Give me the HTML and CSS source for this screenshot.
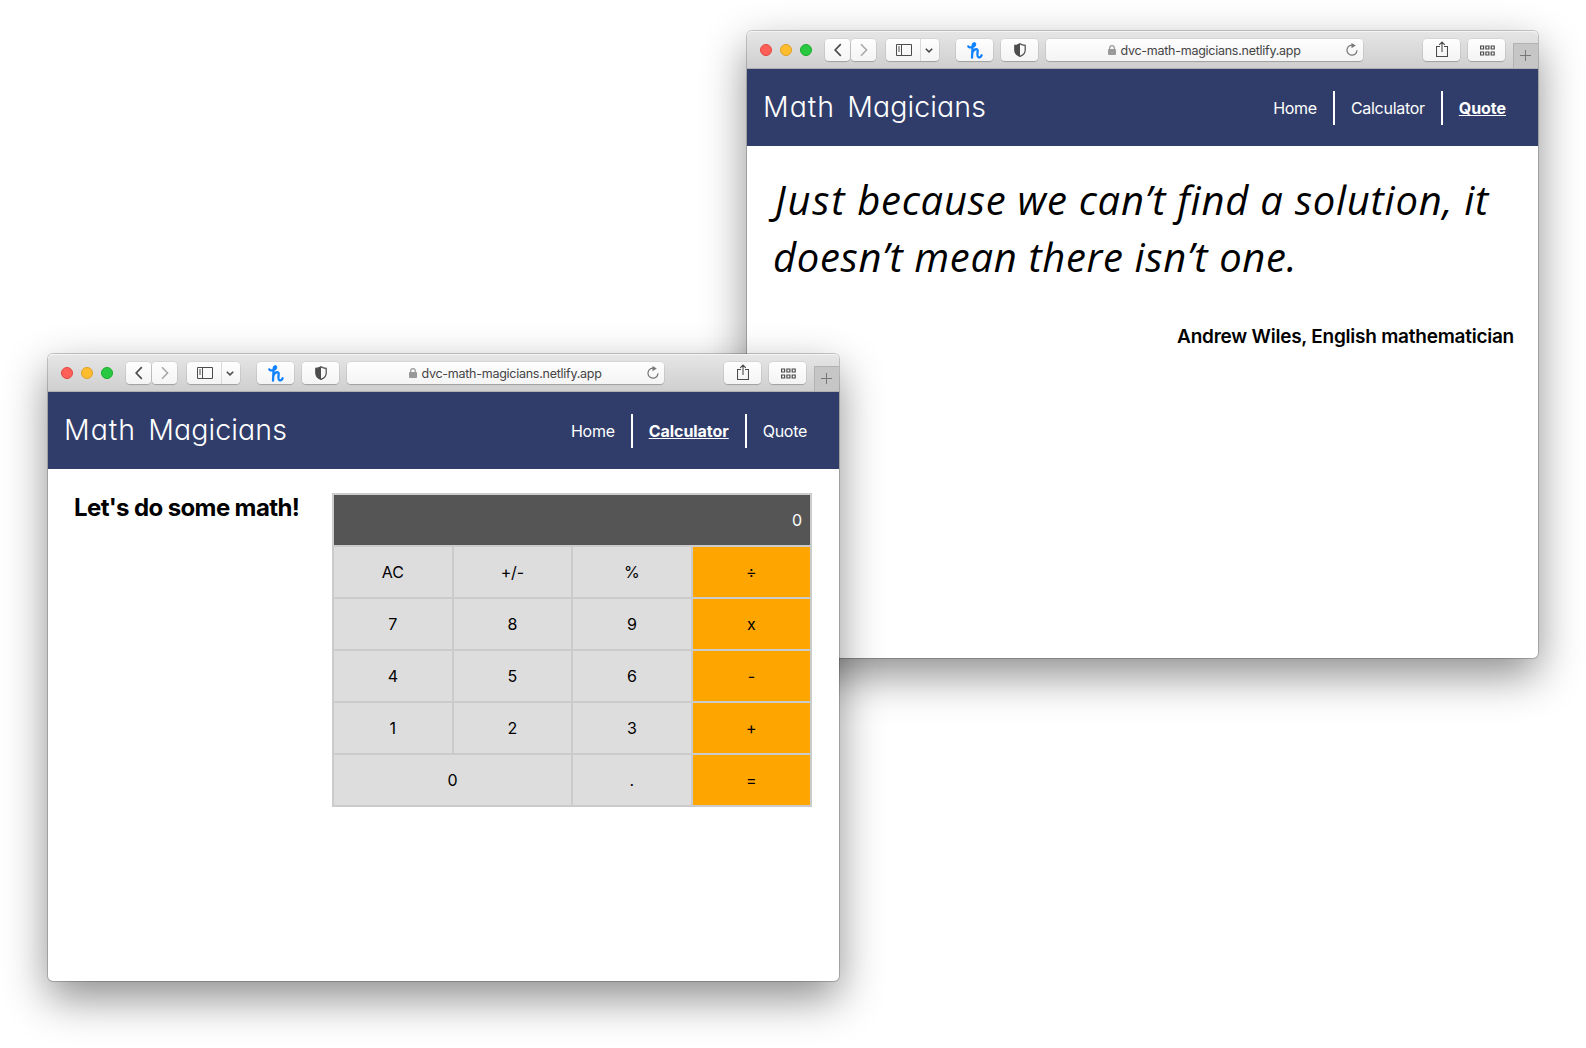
FILE: index.html
```html
<!DOCTYPE html>
<html lang="en">
<head>
<meta charset="utf-8">
<title>Math Magicians</title>
<link rel="stylesheet" href="styles.css">
</head>
<body>
<svg class="sprite" aria-hidden="true">
  <symbol id="back" viewBox="0 0 8 14"><path d="M6.800 1.2 1.2 7 6.800 12.8" fill="none" stroke="currentColor" stroke-width="1.7"/></symbol>
  <symbol id="forward" viewBox="0 0 8 14"><path d="M1 1.2 6.6 7 1 12.8" fill="none" stroke="currentColor" stroke-width="1.5"/></symbol>
  <symbol id="sidebar" viewBox="0 0 16 12"><path d="M.5.5h15v11H.5zM5.5.5v11M2 3h2M2 5h2M2 7h2" fill="none" stroke="currentColor"/></symbol>
  <symbol id="down" viewBox="0 0 8 5"><path d="M.8.8 4 3.9 7.2.8" fill="none" stroke="currentColor" stroke-width="1.6"/></symbol>
  <symbol id="honey" viewBox="0 0 16 17"><path d="M1.300 4.300C1.800 6.400 7.900 5 8.100 2.400 8.200.700 5.900.8 5.700 3.200L5 15.700M5.200 10.800C6.300 7.700 10.600 5.600 10.700 8.600 10.700 10.700 9.500 14.500 11.500 15.300 12.900 15.700 14.100 14.600 14.600 13.300" fill="none" stroke="currentColor" stroke-width="2.300" stroke-linecap="round" stroke-linejoin="round"/></symbol>
  <symbol id="shield" viewBox="0 0 12 14"><path d="M6 .8C7.500 1.900 9.300 2.300 11.200 2.400V7.200C11.200 10.200 9 12.200 6 13.400 3 12.200.8 10.200.8 7.200V2.400C2.700 2.300 4.500 1.900 6 .8Z" fill="none" stroke="currentColor" stroke-width="1.200"/><path d="M6 .8V13.400C3 12.200.8 10.200.8 7.200V2.400C2.700 2.300 4.500 1.900 6 .8Z" fill="currentColor"/></symbol>
  <symbol id="lock" viewBox="0 0 8 10"><rect y="4" width="8" height="6" rx=".8" fill="currentColor"/><path d="M1.700 4.500V3a2.300 2.300 0 0 1 4.600 0v1.500" fill="none" stroke="currentColor" stroke-width="1.200"/></symbol>
  <symbol id="reload" viewBox="0 0 12 13"><path d="M7.500 2.400A5 5 0 1 0 11 7.300" fill="none" stroke="currentColor" stroke-width="1.200"/><path d="M5.500 0 9.800 2.600 5.500 5.200Z" fill="currentColor"/></symbol>
  <symbol id="share" viewBox="0 0 12 16"><path d="M4 5.500H.5v10h11v-10H8M6 11V1M3.200 3.800 6 1l2.800 2.800" fill="none" stroke="currentColor" stroke-width="1.100"/></symbol>
  <symbol id="grid" viewBox="0 0 15 11"><path d="M.6 1h3v3h-3zM5.900 1h3v3h-3zM11.200 1h3v3h-3zM.6 7h3v3h-3zM5.900 7h3v3h-3zM11.200 7h3v3h-3z" fill="none" stroke="currentColor" stroke-width="1.200"/></symbol>
  <symbol id="plus" viewBox="0 0 11 11"><path d="M5.500 0v11M0 5.500h11" fill="none" stroke="currentColor"/></symbol>
</svg>

<section class="window window-quote">
  <div class="toolbar">
    <div class="lights"><i class="light red"></i><i class="light yellow"></i><i class="light green"></i></div>
    <div class="history"><span class="btn"><svg class="i-back"><use href="#back"/></svg></span><span class="btn dim"><svg class="i-back"><use href="#forward"/></svg></span></div>
    <div class="btn side"><span class="side-main"><svg class="i-side"><use href="#sidebar"/></svg></span><span class="side-menu"><svg class="i-down"><use href="#down"/></svg></span></div>
    <div class="btn wide honey"><svg class="i-honey"><use href="#honey"/></svg></div>
    <div class="btn wide shield"><svg class="i-shield"><use href="#shield"/></svg></div>
    <div class="btn address"><svg class="i-lock"><use href="#lock"/></svg><span class="url">dvc-math-magicians.netlify.app</span><svg class="i-reload"><use href="#reload"/></svg></div>
    <div class="btn wide share"><svg class="i-share"><use href="#share"/></svg></div>
    <div class="btn wide tabs"><svg class="i-grid"><use href="#grid"/></svg></div>
    <div class="newtab"><svg class="i-plus"><use href="#plus"/></svg></div>
  </div>
  <header class="site-header">
    <h1 class="brand"><span class="brand-lead">Math</span> Magicians</h1>
    <nav class="nav"><a>Home</a><a>Calculator</a><a class="active">Quote</a></nav>
  </header>
  <main class="quote-page">
    <p class="quote"><span class="line-one"><span class="lead">Just</span> because we can’t find a solution, it</span><br><span class="line-two">doesn’t mean there isn’t one.</span></p>
    <p class="author">Andrew Wiles, English mathematician</p>
  </main>
</section>

<section class="window window-calc">
  <div class="toolbar">
    <div class="lights"><i class="light red"></i><i class="light yellow"></i><i class="light green"></i></div>
    <div class="history"><span class="btn"><svg class="i-back"><use href="#back"/></svg></span><span class="btn dim"><svg class="i-back"><use href="#forward"/></svg></span></div>
    <div class="btn side"><span class="side-main"><svg class="i-side"><use href="#sidebar"/></svg></span><span class="side-menu"><svg class="i-down"><use href="#down"/></svg></span></div>
    <div class="btn wide honey"><svg class="i-honey"><use href="#honey"/></svg></div>
    <div class="btn wide shield"><svg class="i-shield"><use href="#shield"/></svg></div>
    <div class="btn address"><svg class="i-lock"><use href="#lock"/></svg><span class="url">dvc-math-magicians.netlify.app</span><svg class="i-reload"><use href="#reload"/></svg></div>
    <div class="btn wide share"><svg class="i-share"><use href="#share"/></svg></div>
    <div class="btn wide tabs"><svg class="i-grid"><use href="#grid"/></svg></div>
    <div class="newtab"><svg class="i-plus"><use href="#plus"/></svg></div>
  </div>
  <header class="site-header">
    <h1 class="brand"><span class="brand-lead">Math</span> Magicians</h1>
    <nav class="nav"><a>Home</a><a class="active">Calculator</a><a>Quote</a></nav>
  </header>
  <main class="calc-page">
    <h2 class="intro">Let's do some math!</h2>
    <div class="calculator">
      <div class="display">0</div>
      <div class="key">AC</div><div class="key">+/-</div><div class="key">%</div><div class="key op">÷</div>
      <div class="key">7</div><div class="key">8</div><div class="key">9</div><div class="key op">x</div>
      <div class="key">4</div><div class="key">5</div><div class="key">6</div><div class="key op">-</div>
      <div class="key">1</div><div class="key">2</div><div class="key">3</div><div class="key op">+</div>
      <div class="key zero">0</div><div class="key">.</div><div class="key op">=</div>
    </div>
  </main>
</section>
</body>
</html>
```
FILE: styles.css
```css
* { box-sizing: border-box; }
body {
  margin: 0;
  width: 1586px;
  height: 1048px;
  position: relative;
  overflow: hidden;
  background: #fff;
  color: #000;
  font: 16px/1.2 Inter, "Liberation Sans", sans-serif;
}
h1, h2, p { margin: 0; }
.sprite { display: none; }
svg { display: block; flex: none; }

.window {
  position: absolute;
  width: 791px;
  height: 627px;
  border-radius: 5px;
  background: #fff;
  box-shadow: 0 0 0 1px rgba(0, 0, 0, .2), 0 17px 44px rgba(0, 0, 0, .45);
}
.window-quote { left: 747px; top: 31px; }
.window-calc { left: 48px; top: 354px; }

.toolbar {
  display: flex;
  align-items: flex-start;
  height: 38px;
  padding: 8px 0 0 13px;
  border-radius: 5px 5px 0 0;
  border-bottom: 1px solid #b0b0b0;
  background: linear-gradient(#e6e6e6, #cfcfcf);
  box-shadow: inset 0 1px #f4f4f4;
  color: #4c4c4c;
}
.lights { display: flex; gap: 8px; margin: 5px 13px 0 0; }
.light { width: 12px; height: 12px; border-radius: 50%; border: 1px solid; }
.red { background: #ff5f57; border-color: #e2463f; }
.yellow { background: #ffbd2e; border-color: #e0a023; }
.green { background: #28c940; border-color: #1aab29; }
.btn {
  display: flex;
  align-items: center;
  justify-content: center;
  height: 22px;
  border-radius: 4px;
  background: linear-gradient(#fefefe, #f4f4f4);
  box-shadow: 0 0 0 .5px rgba(0, 0, 0, .1), 0 1px 1px rgba(0, 0, 0, .2);
}
.history { display: flex; gap: 1px; margin-right: 10px; }
.history .btn { width: 25px; }
.dim { color: #a6a6a6; }
.side { width: 53px; margin-right: 17px; }
.side-main { display: flex; align-items: center; justify-content: center; width: 35px; height: 22px; padding-left: 1px; border-right: 1px solid #dadada; }
.side-menu { display: flex; justify-content: center; width: 18px; padding-right: 2px; }
.wide { width: 37px; margin-right: 8px; }
.honey { color: #0f82ff; }
.address { position: relative; width: 317px; margin-right: 60px; gap: 4px; color: #999; }
.url { color: #444; font-size: 12.5px; line-height: 22px; letter-spacing: -.26px; padding-top: 1px; }
.newtab {
  display: flex;
  align-items: center;
  justify-content: center;
  width: 25px;
  height: 25px;
  margin-top: 4px;
  border: solid #b2b2b2;
  border-width: 1px 0 0 1px;
  background: #c6c6c6;
  color: #777;
}
.i-back { width: 8px; height: 14px; }
.i-side { width: 16px; height: 12px; }
.i-down { width: 8px; height: 5px; }
.i-honey { width: 16px; height: 17px; }
.i-shield { width: 12px; height: 14px; }
.i-lock { width: 8px; height: 10px; }
.i-reload { position: absolute; right: 5px; top: 4px; width: 12px; height: 13px; color: #777; }
.i-share { width: 12px; height: 16px; margin-bottom: 2px; }
.i-grid { width: 15px; height: 11px; margin-left: 1px; }
.i-plus { width: 11px; height: 11px; margin: 0 1px 1px 0; }

.site-header {
  display: flex;
  align-items: center;
  justify-content: space-between;
  height: 77px;
  padding: 0 16px;
  background: #303d6a;
  color: #fff;
}
.brand { font-size: 28.5px; font-weight: 350; letter-spacing: .1px; word-spacing: 4px; font-feature-settings: "cv11"; white-space: nowrap; }
.brand-lead { letter-spacing: 1px; }
.nav { display: flex; }
.nav a { height: 34px; padding: 0 16px; line-height: 34px; letter-spacing: -.28px; }
.nav a + a { border-left: 2px solid #fff; }
.nav .active { font-weight: 700; text-decoration: underline; letter-spacing: -.05px; }

.quote-page { padding: 25px 24px 0 26px; }
.quote { font: italic 40px/57px "Open Sans", "Noto Sans", sans-serif; white-space: nowrap; }
.line-one { margin-left: 2px; letter-spacing: .75px; }
.lead { letter-spacing: 1.7px; }
.line-two { letter-spacing: .65px; }
.author { margin-top: 41px; text-align: right; font-size: 19px; font-weight: 600; letter-spacing: -.24px; }

.calc-page { display: flex; justify-content: space-between; padding: 24px 27px 0 26px; }
.intro { padding-top: 1px; font-size: 24px; font-weight: 700; letter-spacing: -.62px; white-space: nowrap; }
.calculator {
  display: grid;
  grid-template-columns: repeat(4, 1fr);
  grid-auto-rows: 50px;
  gap: 2px;
  width: 480px;
  padding: 2px;
  background: #cbcbcb;
}
.display, .key { display: flex; align-items: center; justify-content: center; padding-top: 2px; background: #ddd; letter-spacing: -.2px; }
.display { grid-column: span 4; justify-content: flex-end; padding-right: 8px; background: #555; color: #fff; }
.zero { grid-column: span 2; }
.op { background: #ffa500; }
```
